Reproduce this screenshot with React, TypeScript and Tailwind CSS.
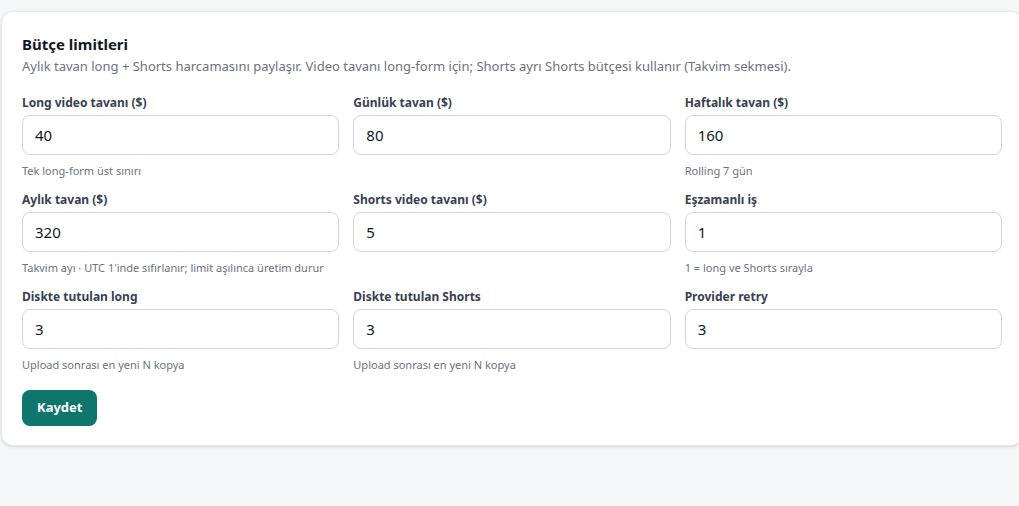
import { useState } from "react";

type Field = {
  key: string;
  label: string;
  value: string;
  hint?: string;
};

const fields: Field[] = [
  { key: "longCap", label: "Long video tavanı ($)", value: "40", hint: "Tek long-form üst sınırı" },
  { key: "daily", label: "Günlük tavan ($)", value: "80" },
  { key: "weekly", label: "Haftalık tavan ($)", value: "160", hint: "Rolling 7 gün" },
  {
    key: "monthly",
    label: "Aylık tavan ($)",
    value: "320",
    hint: "Takvim ayı · UTC 1'inde sıfırlanır; limit aşılınca üretim durur",
  },
  { key: "shortsCap", label: "Shorts video tavanı ($)", value: "5" },
  { key: "concurrency", label: "Eşzamanlı iş", value: "1", hint: "1 = long ve Shorts sırayla" },
  { key: "keepLong", label: "Diskte tutulan long", value: "3", hint: "Upload sonrası en yeni N kopya" },
  { key: "keepShorts", label: "Diskte tutulan Shorts", value: "3", hint: "Upload sonrası en yeni N kopya" },
  { key: "retry", label: "Provider retry", value: "3" },
];

function BudgetField({ field, value, onChange }: { field: Field; value: string; onChange: (v: string) => void }) {
  return (
    <div className="flex flex-col">
      <label className="text-[12px] leading-4 font-bold text-[#374151] mb-1">{field.label}</label>
      <input
        type="text"
        value={value}
        onChange={(e) => onChange(e.target.value)}
        className="h-10 w-full rounded-lg border border-[#d1d5db] bg-white px-3 text-[15px] text-[#111827] outline-none focus:border-teal-600"
      />
      {field.hint ? (
        <p className="mt-2 text-[11px] leading-4 text-[#6b7280]">{field.hint}</p>
      ) : (
        <div className="mt-2 h-4" />
      )}
    </div>
  );
}

export default function App() {
  const [values, setValues] = useState<Record<string, string>>(
    Object.fromEntries(fields.map((f) => [f.key, f.value]))
  );

  return (
    <div
      className="h-screen w-screen overflow-hidden bg-[#f5f6f8]"
      style={{ fontFamily: '"Noto Sans", "Open Sans", sans-serif' }}
    >
      <div className="ml-px mt-[11px] w-[1022px] rounded-xl border border-[#e5e7eb] bg-white px-5 pt-5 pb-[19px] shadow-sm">
        <h2 className="text-[15px] leading-6 font-bold text-[#111827]">Bütçe limitleri</h2>
        <p className="text-[13px] leading-5 text-[#6b7280]">
          Aylık tavan long + Shorts harcamasını paylaşır. Video tavanı long-form için; Shorts ayrı Shorts bütçesi
          kullanır (Takvim sekmesi).
        </p>

        <div className="mt-[19px] grid grid-cols-3 gap-x-[14px] gap-y-[13px]">
          {fields.map((f) => (
            <BudgetField
              key={f.key}
              field={f}
              value={values[f.key]}
              onChange={(v) => setValues((prev) => ({ ...prev, [f.key]: v }))}
            />
          ))}
        </div>

        <button className="mt-[17px] h-9 rounded-lg bg-[#0f766e] px-[15px] text-[13px] font-bold text-white hover:bg-[#115e59]">
          Kaydet
        </button>
      </div>
    </div>
  );
}
